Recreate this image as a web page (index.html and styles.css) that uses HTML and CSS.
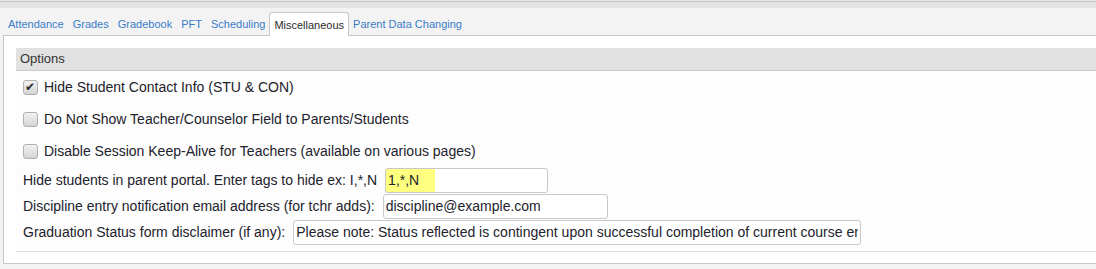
FILE: index.html
```html
<!DOCTYPE html>
<html>
<head>
    <title>District Options</title>
    <link rel="stylesheet" href="styles.css">
</head>
<body>
    <div class="top-strip"></div>

    <div class="tab-bar">
        <a class="tab">Attendance</a>
        <a class="tab">Grades</a>
        <a class="tab">Gradebook</a>
        <a class="tab">PFT</a>
        <a class="tab">Scheduling</a>
        <a class="tab active">Miscellaneous</a>
        <a class="tab">Parent Data Changing</a>
    </div>

    <div class="tab-panel">
        <div class="options-section">
            <div class="section-header">Options</div>

            <label class="check-row">
                <input type="checkbox" class="check" checked>
                <span>Hide Student Contact Info (STU &amp; CON)</span>
            </label>
            <label class="check-row">
                <input type="checkbox" class="check">
                <span>Do Not Show Teacher/Counselor Field to Parents/Students</span>
            </label>
            <label class="check-row">
                <input type="checkbox" class="check">
                <span>Disable Session Keep-Alive for Teachers (available on various pages)</span>
            </label>

            <div class="field-row">
                <span class="field-label">Hide students in parent portal. Enter tags to hide ex: I,*,N</span>
                <input type="text" class="field-input tags-input" value="1,*,N">
            </div>
            <div class="field-row">
                <span class="field-label">Discipline entry notification email address (for tchr adds):</span>
                <input type="text" class="field-input email-input" value="discipline@example.com">
            </div>
            <div class="field-row">
                <span class="field-label">Graduation Status form disclaimer (if any):</span>
                <input type="text" class="field-input disclaimer-input" value="Please note: Status reflected is contingent upon successful completion of current course enrollment.">
            </div>
        </div>
    </div>
</body>
</html>
```

FILE: styles.css
```css
body {
    margin: 0;
    background: #f3f3f3;
    font-family: "Liberation Sans", Arial, sans-serif;
    color: #22222c;
    overflow: hidden;
}

.top-strip {
    height: 8px;
    background: linear-gradient(#e4e4e4 0 1px, #c8c8c8 1px 2px, #e4e4e4 2px);
}

.tab-bar {
    display: flex;
    align-items: flex-end;
    height: 27px;
    padding-left: 3px;
    font-size: 11px;
}

.tab {
    display: block;
    box-sizing: border-box;
    height: 24px;
    line-height: 20px;
    padding: 2px 4px 0;
    margin-right: -1px;
    border: 1px solid transparent;
    border-bottom: none;
    color: #3a7cc8;
    cursor: pointer;
}

.tab.active {
    background: #fff;
    border-color: #c8c8c8;
    border-radius: 3px 3px 0 0;
    color: #2a2a2a;
    position: relative;
    top: 1px;
}

.tab-panel {
    margin-left: 3px;
    background: #fff;
    border-top: 1px solid #c8c8c8;
    border-left: 1px solid #c8c8c8;
    border-bottom: 1px solid #c8c8c8;
    padding: 12px 0 11px 12px;
}

.options-section {
    background: #fdfdfd;
    border-bottom: 1px solid #e0e0e0;
    padding-bottom: 6px;
    font-size: 14px;
}

.section-header {
    height: 22px;
    line-height: 22px;
    padding-left: 4px;
    background: #e0e1e0;
    border-bottom: 1px solid #c8c8c8;
    font-size: 13px;
    color: #333;
}

.check-row {
    display: flex;
    align-items: center;
    gap: 6px;
    height: 32px;
    padding-left: 7px;
}

.check {
    appearance: none;
    -webkit-appearance: none;
    margin: 0;
    width: 15px;
    height: 15px;
    border: 1px solid #b0b0b0;
    border-radius: 3px;
    background: linear-gradient(#f2f2f2, #d4d4d4);
    position: relative;
    flex-shrink: 0;
}

.check:checked::after {
    content: "\2714";
    position: absolute;
    left: 1px;
    top: 0;
    font-family: "DejaVu Sans", sans-serif;
    font-size: 12px;
    line-height: 13px;
    color: #2a2a2a;
}

.field-row {
    display: flex;
    align-items: center;
    gap: 8px;
    height: 26px;
    padding-left: 7px;
}

.field-input {
    box-sizing: border-box;
    height: 25px;
    margin: 0;
    padding: 0 2px;
    border: 1px solid #c8c8c8;
    border-radius: 3px;
    background: #fff;
    font-family: "Liberation Sans", Arial, sans-serif;
    font-size: 14px;
    color: #22222c;
    outline: none;
}

.tags-input {
    width: 163px;
    background: linear-gradient(to right, #ffff80 49px, #fff 49px);
}

.email-input {
    width: 225px;
}

.disclaimer-input {
    width: 568px;
}
```
